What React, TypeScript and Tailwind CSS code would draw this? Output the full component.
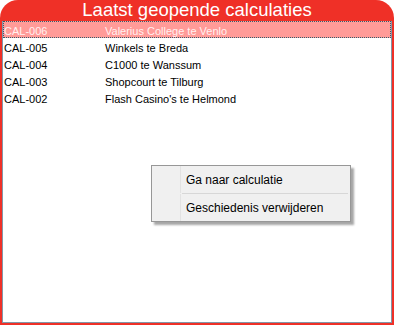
const rows = [
	{ code: "CAL-006", name: "Valerius College te Venlo" },
	{ code: "CAL-005", name: "Winkels te Breda" },
	{ code: "CAL-004", name: "C1000 te Wanssum" },
	{ code: "CAL-003", name: "Shopcourt te Tilburg" },
	{ code: "CAL-002", name: "Flash Casino's te Helmond" },
]

export default function App() {
	return (
		<div
			className="relative flex h-[325px] w-[394px] flex-col rounded-t-[18px] bg-[#ef3027] px-[2px] pb-[2px]"
			style={{ fontFamily: '"Liberation Sans", Arial, sans-serif' }}
		>
			<header className="flex h-[21px] items-center justify-center text-[18.5px] leading-none text-white">
				Laatst geopende calculaties
			</header>
			<div className="flex-1 border border-t-0 border-[#8297a8] bg-white text-[11px] text-black">
				{rows.map((row, i) => (
					<div
						key={row.code}
						className={
							i === 0
								? "flex h-[17px] items-center border border-dotted border-[#2f5f6f] bg-[#ff9b98] pt-[3px] text-[#fff0f0]"
								: "flex h-[17px] items-center border border-transparent pt-[3px]"
						}
					>
						<span className="w-[101px]">{row.code}</span>
						<span>{row.name}</span>
					</div>
				))}
			</div>

			<div className="absolute left-[151px] top-[165px] flex w-[200px] flex-col border border-[#979797] bg-[#f0f0f0] text-[12px] text-black shadow-[3px_3px_2px_rgba(0,0,0,0.35)]">
				<div className="flex h-[27px] items-center">
					<div className="h-full w-[29px] border-r border-[#e2e2e2]" />
					<span className="pl-[5px]">Ga naar calculatie</span>
				</div>
				<div className="ml-[30px] mr-[2px] h-px bg-[#d7d7d7]" />
				<div className="flex h-[27px] items-center">
					<div className="h-full w-[29px] border-r border-[#e2e2e2]" />
					<span className="pl-[5px]">Geschiedenis verwijderen</span>
				</div>
			</div>
		</div>
	)
}
